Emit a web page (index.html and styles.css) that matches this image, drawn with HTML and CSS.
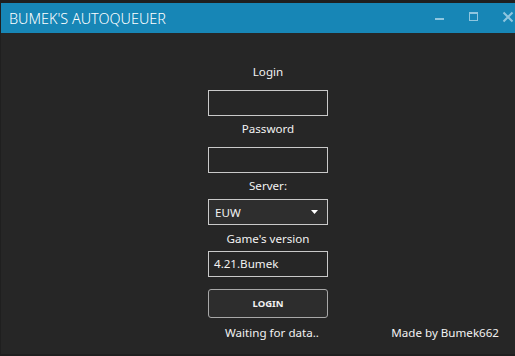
FILE: index.html
```html
<!DOCTYPE html>
<html>
<head>
<meta charset="utf-8">
<link rel="stylesheet" href="styles.css">
</head>
<body>
<div class="window">
  <div class="titlebar">
    <span class="title">BUMEK'S AUTOQUEUER</span>
    <div class="controls">
      <svg class="ctl" width="12" height="12" viewBox="0 0 12 12"><rect x="1" y="7" width="9" height="2" fill="#8fc6df"/></svg>
      <svg class="ctl" width="12" height="12" viewBox="0 0 12 12"><rect x="1.5" y="1.5" width="8" height="8" fill="none" stroke="#8fc6df" stroke-width="1"/><rect x="1" y="1" width="9" height="2" fill="#8fc6df"/></svg>
      <svg class="ctl" width="12" height="12" viewBox="0 0 12 12"><path d="M1.5 1.5 L10.5 10.5 M10.5 1.5 L1.5 10.5" stroke="#8fc6df" stroke-width="2" fill="none"/></svg>
    </div>
  </div>
  <div class="content">
    <div class="form">
      <div class="label l-login">Login</div>
      <div class="input"></div>
      <div class="label l-pass">Password</div>
      <div class="input"></div>
      <div class="label l-server">Server:</div>
      <div class="select"><span>EUW</span><svg width="7" height="4" viewBox="0 0 7 4"><path d="M0 0 H7 L3.5 4 Z" fill="#ffffff"/></svg></div>
      <div class="label l-game">Game's version</div>
      <div class="input text">4.21.Bumek</div>
      <div class="button">LOGIN</div>
      <div class="status">Waiting for data..</div>
    </div>
    <div class="credit">Made by Bumek662</div>
  </div>
</div>
</body>
</html>
```
FILE: styles.css
```css
* { box-sizing: border-box; }
html, body { margin: 0; padding: 0; }
body {
  background: #1f1f1f;
  font-family: "Noto Sans", "Open Sans", sans-serif;
  color: #f2f2f2;
  width: 515px;
  height: 356px;
  overflow: hidden;
}
.window {
  margin-top: 3px;
  margin-left: 1px;
  height: 351px;
  background: #262626;
  display: flex;
  flex-direction: column;
}
.titlebar {
  height: 30px;
  background: #1786b6;
  display: flex;
  align-items: center;
  justify-content: space-between;
  padding-left: 8px;
}
.title {
  font-size: 14.4px;
  color: #ffffff;
  font-weight: 300;
}
.controls {
  display: flex;
  align-items: center;
  gap: 22px;
  padding-right: 1px;
  margin-top: -2px;
}
.ctl { display: block; }
.ctl:first-child { margin-left: 1px; }
.content {
  display: grid;
  grid-template-columns: 207px 120px 1fr;
  padding-top: 31px;
}
.form {
  grid-column: 2;
  display: flex;
  flex-direction: column;
  align-items: stretch;
}
.label {
  height: 16px;
  line-height: 16px;
  font-size: 11.6px;
  text-align: center;
}
.l-login { margin-bottom: 10px; }
.l-pass { margin-top: 5px; margin-bottom: 10px; }
.l-server { margin-top: 5px; margin-bottom: 5px; }
.l-game { margin-top: 6px; margin-bottom: 4px; }
.input {
  height: 26px;
  border: 1px solid #c9c9c9;
  background: #262626;
}
.input.text {
  font-size: 11.6px;
  line-height: 24px;
  padding-left: 5px;
}
.select {
  height: 26px;
  border: 1px solid #c9c9c9;
  background: #2e2e2e;
  display: flex;
  align-items: center;
  justify-content: space-between;
  padding: 0 9px 0 6px;
  font-size: 11.6px;
}
.button {
  margin-top: 12px;
  height: 29px;
  border: 1px solid #a8a8a8;
  border-radius: 3px;
  background: #2d2d2d;
  font-size: 9.5px;
  font-weight: bold;
  display: flex;
  align-items: center;
  justify-content: center;
}
.status {
  margin-top: 7px;
  height: 16px;
  line-height: 16px;
  font-size: 11.6px;
  text-align: center;
  margin-left: 8px;
  white-space: nowrap;
}
.credit {
  grid-column: 3;
  align-self: end;
  height: 16px;
  line-height: 16px;
  font-size: 11.6px;
  text-align: right;
  padding-right: 16px;
  white-space: nowrap;
}
```
